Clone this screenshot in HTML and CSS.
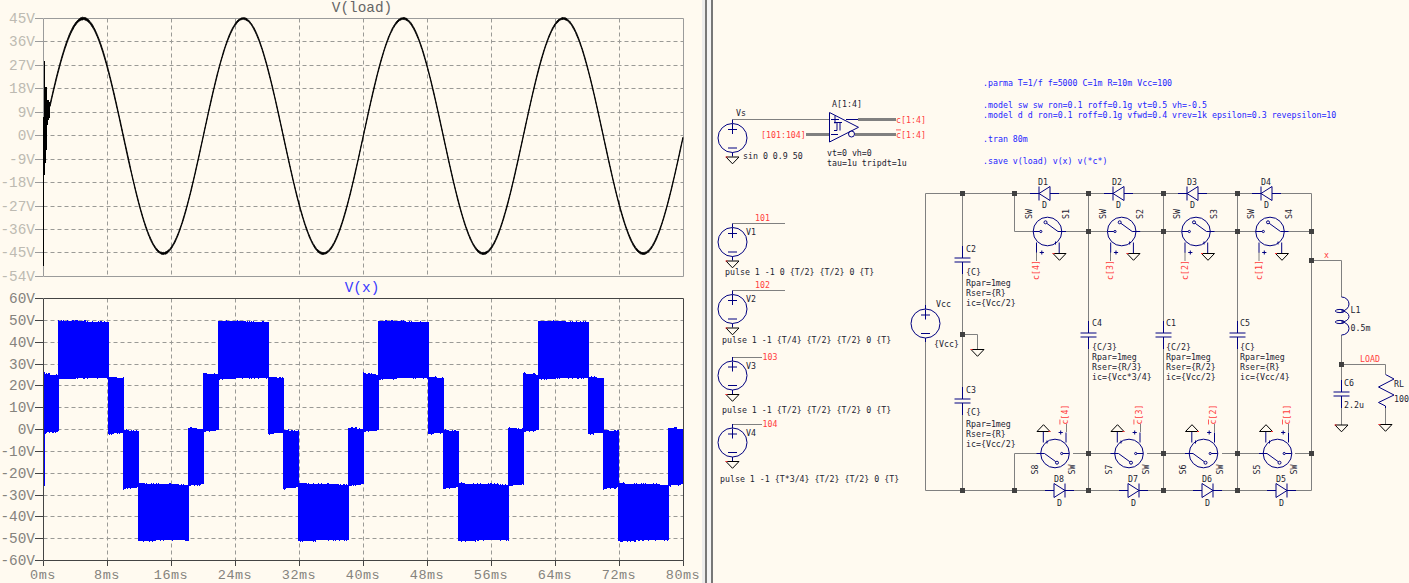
FILE: index.html
```html
<!DOCTYPE html>
<html lang="en">
<head>
<meta charset="utf-8">
<title>Simulation</title>
<link rel="stylesheet" href="styles.css">
</head>
<body>
<div class="app">
  <section class="plots">
    <svg class="plot plot-top" viewBox="0 0 702 279" width="702" height="279" aria-label="V(load) plot">
      <text class="title title-load" x="362" y="12">V(load)</text>
      <path class="grid" d="M107.5 18.5V276.5M171.5 18.5V276.5M235.5 18.5V276.5M299.5 18.5V276.5M363.5 18.5V276.5M427.5 18.5V276.5M491.5 18.5V276.5M555.5 18.5V276.5M619.5 18.5V276.5M43.5 41.5H683.5M43.5 65.5H683.5M43.5 88.5H683.5M43.5 112.5H683.5M43.5 135.5H683.5M43.5 159.5H683.5M43.5 182.5H683.5M43.5 206.5H683.5M43.5 229.5H683.5M43.5 252.5H683.5"/>
      <path class="axis axis-dim" d="M43.5 18.5H683.5V276.5H43.5ZM35 18.5H43M35 41.5H43M35 65.5H43M35 88.5H43M35 112.5H43M35 135.5H43M35 159.5H43M35 182.5H43M35 206.5H43M35 229.5H43M35 252.5H43M35 276.5H43"/>
      <g class="ticks ticks-dim">
        <text x="35" y="23">45V</text><text x="35" y="46">36V</text><text x="35" y="70">27V</text><text x="35" y="93">18V</text><text x="35" y="117">9V</text><text x="35" y="140">0V</text><text x="35" y="164">-9V</text><text x="35" y="187">-18V</text><text x="35" y="211">-27V</text><text x="35" y="234">-36V</text><text x="35" y="257">-45V</text><text x="35" y="281">-54V</text>
      </g>
      <path class="spike" d="M43.5 266V117M44.5 61V175M45.5 87V163M46.5 87V150M47.5 100V125M48.5 100V120M49.5 102V118"/>
      <path id="wave-load" class="wave-load"/>
    </svg>
    <svg class="plot plot-bottom" viewBox="0 279 702 304" width="702" height="304" aria-label="V(x) plot">
      <text class="title title-x" x="362" y="292">V(x)</text>
      <path class="grid" d="M107.5 298.5V560.5M171.5 298.5V560.5M235.5 298.5V560.5M299.5 298.5V560.5M363.5 298.5V560.5M427.5 298.5V560.5M491.5 298.5V560.5M555.5 298.5V560.5M619.5 298.5V560.5M43.5 320.5H683.5M43.5 342.5H683.5M43.5 364.5H683.5M43.5 385.5H683.5M43.5 407.5H683.5M43.5 429.5H683.5M43.5 451.5H683.5M43.5 473.5H683.5M43.5 495.5H683.5M43.5 516.5H683.5M43.5 538.5H683.5"/>
      <path id="wave-x" class="wave-x"/>
      <path class="axis axis-live" d="M43.5 298.5H683.5V560.5H43.5ZM35 298.5H43M35 320.5H43M35 342.5H43M35 364.5H43M35 385.5H43M35 407.5H43M35 429.5H43M35 451.5H43M35 473.5H43M35 495.5H43M35 516.5H43M35 538.5H43M35 560.5H43M43.5 560.5V566M107.5 560.5V566M171.5 560.5V566M235.5 560.5V566M299.5 560.5V566M363.5 560.5V566M427.5 560.5V566M491.5 560.5V566M555.5 560.5V566M619.5 560.5V566M683.5 560.5V566"/>
      <g class="ticks ticks-live">
        <text x="35" y="303">60V</text><text x="35" y="325">50V</text><text x="35" y="347">40V</text><text x="35" y="369">30V</text><text x="35" y="390">20V</text><text x="35" y="412">10V</text><text x="35" y="434">0V</text><text x="35" y="456">-10V</text><text x="35" y="478">-20V</text><text x="35" y="500">-30V</text><text x="35" y="521">-40V</text><text x="35" y="543">-50V</text><text x="35" y="565">-60V</text>
      </g>
      <g class="ticks-x">
        <text x="43" y="578.8">0ms</text><text x="107" y="578.8">8ms</text><text x="171" y="578.8">16ms</text><text x="235" y="578.8">24ms</text><text x="299" y="578.8">32ms</text><text x="363" y="578.8">40ms</text><text x="427" y="578.8">48ms</text><text x="491" y="578.8">56ms</text><text x="555" y="578.8">64ms</text><text x="619" y="578.8">72ms</text><text x="683" y="578.8">80ms</text>
      </g>
    </svg>
  </section>

  <div class="splitter"><span class="split-a"></span><span class="split-b"></span><span class="split-c"></span><span class="split-d"></span></div>

  <section class="schematic">
    <svg class="sheet" viewBox="713 0 696 583" width="696" height="583" aria-label="Schematic">
      <defs>
        <g id="vsrc" class="sym">
          <circle r="14.5"/>
          <path d="M0 -18.5V-14.5M0 -14V-4M-4.5 -8.5H4.5M-4.5 10H4.5M0 14.5V18.5"/>
        </g>
        <g id="gnd">
          <polygon class="gnd" points="-6.5,0 6.5,0 0,6.8"/>
          <rect class="gnd-dot" x="-7" y="-0.5" width="2" height="1"/>
        </g>
        <g id="cap" class="sym">
          <path d="M0 -14V-2M-8 -2H8M-8 2H8M0 2V14"/>
        </g>
        <g id="dl" class="sym">
          <path d="M-14.5 0H-5.5M-5.5 -7V7M5.5 -7V7L-5.5 0L5.5 -7M5.5 0H14.5"/>
        </g>
        <g id="dr" class="sym">
          <path d="M-14.5 0H-5.5M5.5 -7V7M-5.5 -7V7L5.5 0L-5.5 -7M5.5 0H14.5"/>
        </g>
        <g id="sw" class="sym">
          <circle r="14.3"/>
          <circle cx="-6.7" cy="0" r="1.1"/>
          <circle cx="-2" cy="-9.2" r="1.5"/>
          <path d="M-14.3 0H-7.8M-0.8 -8.2L10.5 0H18.5M-11 11V21M11.7 11V22M8 10V13M-7.8 21H-3.6M-5.7 19V23"/>
        </g>
      </defs>

      <path class="wire" d="M732.5 119.5H829M732.5 223.5H785M732.5 290.5H785M732.5 357.5H762M732.5 424.5H762"/>
      <path class="wire" d="M925.5 193.5V305M925.5 341.5V490.5M962.5 193.5V246M962.5 274V387M962.5 415V490.5M925.5 193.5H1030M1059 193.5H1104M1133 193.5H1178M1207 193.5H1252M1281 193.5H1311.5V490.5M925.5 490.5H1045M1073 490.5H1119M1148 490.5H1193M1222 490.5H1267M1296 490.5H1311.5"/>
      <path class="wire" d="M1014.5 193.5V231.5H1033M1066 231.5H1107M1140 231.5H1181M1214 231.5H1256M1288 231.5H1311.5M1014.5 490.5V453.5H1041M1073 453.5H1115M1147 453.5H1189M1222 453.5H1263M1295 453.5H1311.5"/>
      <path class="wire" d="M1088.5 193.5V321M1088.5 349V490.5M1163.5 193.5V321M1163.5 349V490.5M1237.5 193.5V321M1237.5 349V490.5M962.5 334.5H977.5V349M1311.5 260.5H1341.5V297M1341.5 335V380M1341.5 408V425M1341.5 364.5H1385.5V374M1385.5 408V424"/>
      <path class="wire" d="M1036.5 252V261M1110.5 252V261M1185 252V261M1259 252V261M1066.5 424V432M1140.5 424V432M1214.5 424V432M1288.5 424V432"/>
      <path class="bus" d="M858 119.5H896M855 134.5H896M806 134.5H829"/>

      <use href="#vsrc" x="732.5" y="138"/><use href="#gnd" x="732.5" y="157"/>
      <use href="#vsrc" x="732.5" y="242"/><use href="#gnd" x="732.5" y="261"/>
      <use href="#vsrc" x="732.5" y="309"/><use href="#gnd" x="732.5" y="328"/>
      <use href="#vsrc" x="732.5" y="375.5"/><use href="#gnd" x="732.5" y="394.5"/>
      <use href="#vsrc" x="732.5" y="442.5"/><use href="#gnd" x="732.5" y="461.5"/>
      <use href="#vsrc" x="925.5" y="323.5"/>

      <g class="sym">
        <path d="M829.5 112.5V142L858.5 127.3ZM831 119.5H839M835 115.5V123.5M831 134.5H838M846 119.5H858M834 130.5H837V122.5H840M840 122.5V130.5M834 122.5H842"/>
        <circle cx="851.5" cy="134" r="3"/>
        <path d="M1341.5 297a7.5 7 0 0 1 0 14a7.5 5.5 0 0 1 0 11a7.5 6.5 0 0 1 0 13"/>
        <ellipse cx="1340" cy="311" rx="4.7" ry="1.6"/>
        <ellipse cx="1340" cy="322" rx="4.7" ry="1.6"/>
        <path d="M1385.5 374.5L1394 379L1378.5 387L1394 395L1378.5 402.5L1385.5 406V408"/>
      </g>

      <use href="#cap" x="962.5" y="260"/>
      <use href="#cap" x="962.5" y="401"/>
      <use href="#cap" x="1088.5" y="335"/>
      <use href="#cap" x="1163.5" y="335"/>
      <use href="#cap" x="1237.5" y="335"/>
      <use href="#cap" x="1341.5" y="394"/>

      <use href="#dl" x="1044.5" y="193.5"/><use href="#dl" x="1118.5" y="193.5"/><use href="#dl" x="1192.5" y="193.5"/><use href="#dl" x="1266.5" y="193.5"/>
      <use href="#dr" x="1059.5" y="490.5"/><use href="#dr" x="1133.5" y="490.5"/><use href="#dr" x="1207.5" y="490.5"/><use href="#dr" x="1281.5" y="490.5"/>

      <use href="#sw" x="1047.5" y="231.5"/><use href="#sw" x="1121.7" y="231.5"/><use href="#sw" x="1196" y="231.5"/><use href="#sw" x="1270" y="231.5"/>
      <use href="#sw" transform="translate(1055 453.5) rotate(180)"/><use href="#sw" transform="translate(1129 453.5) rotate(180)"/><use href="#sw" transform="translate(1203.5 453.5) rotate(180)"/><use href="#sw" transform="translate(1277.5 453.5) rotate(180)"/>

      <use href="#gnd" x="1059.5" y="253.5"/><use href="#gnd" x="1133.5" y="253.5"/><use href="#gnd" x="1208" y="253.5"/><use href="#gnd" x="1282" y="253.5"/>
      <use href="#gnd" transform="translate(1043.5 431.5) rotate(180)"/><use href="#gnd" transform="translate(1117.5 431.5) rotate(180)"/><use href="#gnd" transform="translate(1192 431.5) rotate(180)"/><use href="#gnd" transform="translate(1266 431.5) rotate(180)"/>
      <use href="#gnd" x="977.5" y="349.5"/><use href="#gnd" x="1341.5" y="425"/><use href="#gnd" x="1385.5" y="424.5"/>

      <g class="junctions">
        <rect x="960" y="191" width="5" height="5"/><rect x="1012" y="191" width="5" height="5"/><rect x="1086" y="191" width="5" height="5"/><rect x="1161" y="191" width="5" height="5"/><rect x="1235" y="191" width="5" height="5"/>
        <rect x="1086" y="229" width="5" height="5"/><rect x="1161" y="229" width="5" height="5"/><rect x="1235" y="229" width="5" height="5"/><rect x="1309" y="229" width="5" height="5"/>
        <rect x="1309" y="258" width="5" height="5"/><rect x="960" y="332" width="5" height="5"/><rect x="1339" y="362" width="5" height="5"/>
        <rect x="1086" y="451" width="5" height="5"/><rect x="1161" y="451" width="5" height="5"/><rect x="1235" y="451" width="5" height="5"/><rect x="1309" y="451" width="5" height="5"/>
        <rect x="960" y="488" width="5" height="5"/><rect x="1012" y="488" width="5" height="5"/><rect x="1086" y="488" width="5" height="5"/><rect x="1161" y="488" width="5" height="5"/><rect x="1235" y="488" width="5" height="5"/>
      </g>

      <g class="dir">
        <text x="983" y="85.5">.parma T=1/f f=5000 C=1m R=10m Vcc=100</text>
        <text x="983" y="107.5">.model sw sw ron=0.1 roff=0.1g vt=0.5 vh=-0.5</text>
        <text x="983" y="118">.model d d ron=0.1 roff=0.1g vfwd=0.4 vrev=1k epsilon=0.3 revepsilon=10</text>
        <text x="983" y="141.5">.tran 80m</text>
        <text x="983" y="164">.save v(load) v(x) v(*c*)</text>
      </g>

      <g class="lbl">
        <text x="736" y="116">Vs</text><text x="743" y="159">sin 0 0.9 50</text>
        <text x="832" y="107">A[1:4]</text><text x="827" y="156">vt=0 vh=0</text><text x="827" y="166">tau=1u tripdt=1u</text>
        <text x="746" y="235">V1</text><text x="725" y="275">pulse 1 -1 0 {T/2} {T/2} 0 {T}</text>
        <text x="746" y="302">V2</text><text x="722" y="343">pulse 1 -1 {T/4} {T/2} {T/2} 0 {T}</text>
        <text x="746" y="369">V3</text><text x="722" y="413">pulse 1 -1 {T/2} {T/2} {T/2} 0 {T}</text>
        <text x="746" y="436">V4</text><text x="720" y="482">pulse 1 -1 {T*3/4} {T/2} {T/2} 0 {T}</text>
        <text x="936" y="307">Vcc</text><text x="934" y="347">{Vcc}</text>

        <text x="966" y="252">C2</text><text x="966" y="274.5">{C}</text><text x="966" y="285.5">Rpar=1meg</text><text x="966" y="295.5">Rser={R}</text><text x="966" y="305.5">ic={Vcc/2}</text>
        <text x="966" y="393">C3</text><text x="966" y="415">{C}</text><text x="966" y="426.5">Rpar=1meg</text><text x="966" y="436.5">Rser={R}</text><text x="966" y="446.5">ic={Vcc/2}</text>
        <text x="1092" y="325.5">C4</text><text x="1092" y="349.5">{C/3}</text><text x="1092" y="359.5">Rpar=1meg</text><text x="1092" y="369.5">Rser={R/3}</text><text x="1092" y="379.5">ic={Vcc*3/4}</text>
        <text x="1166" y="325.5">C1</text><text x="1166" y="349.5">{C/2}</text><text x="1166" y="359.5">Rpar=1meg</text><text x="1166" y="369.5">Rser={R/2}</text><text x="1166" y="379.5">ic={Vcc/2}</text>
        <text x="1240" y="325.5">C5</text><text x="1240" y="349.5">{C}</text><text x="1240" y="359.5">Rpar=1meg</text><text x="1240" y="369.5">Rser={R}</text><text x="1240" y="379.5">ic={Vcc/4}</text>

        <text x="1038" y="184.5">D1</text><text x="1042" y="208">D</text><text x="1112" y="184.5">D2</text><text x="1116" y="208">D</text><text x="1187" y="184.5">D3</text><text x="1190" y="208">D</text><text x="1261" y="184.5">D4</text><text x="1264" y="208">D</text>
        <text x="1054" y="481.5">D8</text><text x="1057" y="505.5">D</text><text x="1128" y="481.5">D7</text><text x="1131" y="505.5">D</text><text x="1202" y="481.5">D6</text><text x="1205" y="505.5">D</text><text x="1276" y="481.5">D5</text><text x="1279" y="505.5">D</text>

        <text transform="translate(1032 219) rotate(-90)">SW</text><text transform="translate(1069 219) rotate(-90)">S1</text>
        <text transform="translate(1106 219) rotate(-90)">SW</text><text transform="translate(1143 219) rotate(-90)">S2</text>
        <text transform="translate(1180 219) rotate(-90)">SW</text><text transform="translate(1217 219) rotate(-90)">S3</text>
        <text transform="translate(1254 219) rotate(-90)">SW</text><text transform="translate(1292 219) rotate(-90)">S4</text>
        <text transform="translate(1038 474.5) rotate(-90)">S8</text><text transform="translate(1075 474.5) rotate(-90)">SW</text>
        <text transform="translate(1112 474.5) rotate(-90)">S7</text><text transform="translate(1149 474.5) rotate(-90)">SW</text>
        <text transform="translate(1186 474.5) rotate(-90)">S6</text><text transform="translate(1223 474.5) rotate(-90)">SW</text>
        <text transform="translate(1260 474.5) rotate(-90)">S5</text><text transform="translate(1297 474.5) rotate(-90)">SW</text>

        <text x="1350.5" y="313">L1</text><text x="1350.5" y="331">0.5m</text>
        <text x="1344" y="386">C6</text><text x="1344" y="408">2.2u</text>
        <text x="1394" y="386.5">RL</text><text x="1394" y="402">100</text>
      </g>

      <g class="net">
        <text x="761" y="137.5">[101:104]</text>
        <text x="896" y="122.5">c[1:4]</text>
        <text x="896" y="137.5"><tspan class="bar">c</tspan>[1:4]</text>
        <text x="755" y="221">101</text><text x="755" y="288">102</text><text x="762.6" y="360">103</text><text x="762.6" y="427">104</text>
        <text x="1324" y="258">x</text><text x="1360" y="362">LOAD</text>
        <text transform="translate(1039 280) rotate(-90)">c[4]</text>
        <text transform="translate(1113 280) rotate(-90)">c[3]</text>
        <text transform="translate(1187.5 280) rotate(-90)">c[2]</text>
        <text transform="translate(1261.5 280) rotate(-90)">c[1]</text>
        <text transform="translate(1067.5 424.5) rotate(-90)"><tspan class="bar">c</tspan>[4]</text>
        <text transform="translate(1141.5 424.5) rotate(-90)"><tspan class="bar">c</tspan>[3]</text>
        <text transform="translate(1216 424.5) rotate(-90)"><tspan class="bar">c</tspan>[2]</text>
        <text transform="translate(1290 424.5) rotate(-90)"><tspan class="bar">c</tspan>[1]</text>
      </g>
    </svg>
  </section>
</div>
<script src="plot.js"></script>
</body>
</html>
```
FILE: styles.css
```css
html, body { margin: 0; padding: 0; height: 100%; background: #fffaf0; overflow: hidden; }
.app { display: flex; width: 1409px; height: 583px; background: #fffaf0; }
.plots { display: flex; flex-direction: column; width: 702px; flex: none; }
.plot { display: block; flex: none; overflow: visible; }
.schematic { flex: 1; min-width: 0; }
.sheet { display: block; }

.splitter { display: flex; flex: none; width: 11px; height: 583px; }
.split-a { width: 3px; background: #ececec; }
.split-b { width: 2px; background: #777777; }
.split-c { width: 4px; background: #f4f4f4; }
.split-d { width: 2px; background: #777777; }

.title, .ticks text, .ticks-x text { font-family: "Liberation Mono", "DejaVu Sans Mono", monospace; font-size: 14.4px; }
.title { text-anchor: middle; }
.title-load { fill: #666666; }
.title-x { fill: #3a3aff; }
.ticks text { text-anchor: end; }
.ticks-dim text { fill: #bdbab2; }
.ticks-live text { fill: #85837d; }
.ticks-x text { fill: #85837d; text-anchor: middle; font-size: 13.5px; letter-spacing: 0.5px; }
.grid { fill: none; stroke: #9a9a96; stroke-width: 1; stroke-dasharray: 4 3; }
.axis { fill: none; stroke-width: 1; }
.axis-dim { stroke: #9b9b9b; }
.axis-live { stroke: #444444; }
.spike { fill: none; stroke: #000000; stroke-width: 1; }
.wave-load { fill: #000000; stroke: #000000; stroke-width: 0.9; }
.wave-x { fill: #0000ff; }

.wire { fill: none; stroke: #808080; stroke-width: 1; }
.bus { fill: none; stroke: #808080; stroke-width: 3; }
.sym { fill: none; stroke: #000080; stroke-width: 1; }
.gnd { fill: none; stroke: #000000; stroke-width: 1; }
.gnd-dot { fill: #ff3030; }
.junctions rect { fill: #404040; }

.lbl text, .net text, .dir text { font-family: "DejaVu Sans Mono", "Liberation Mono", monospace; font-size: 8.27px; }
.lbl text { fill: #1c2230; }
.net text { fill: #ff3c3c; }
.dir text { fill: #2424ff; }
.bar { text-decoration: overline; }
```
FILE: plot.js
```js
(function () {
  var seed = 7;
  function rnd() {
    seed = (seed * 16807) % 2147483647;
    return seed / 2147483647;
  }

  // V(load): sine with a small vertical switching ripple
  var up = [], low = [], x, y, a;
  for (x = 50; x <= 683.4; x += 0.8) {
    y = 136 - 117.5 * Math.sin((2 * Math.PI * (x - 43.3)) / 160);
    a = (x < 130 ? 1.0 : 0.7) + rnd() * 0.4;
    up.push(x.toFixed(1) + ' ' + (y - a).toFixed(1));
    low.unshift(x.toFixed(1) + ' ' + (y + a).toFixed(1));
  }
  document.getElementById('wave-load').setAttribute('d', 'M' + up.join('L') + 'L' + low.join('L') + 'Z');

  // V(x): staircase of PWM blocks, one period = 160px
  var pattern = [
    [58, 108.7, 320.7, 379],
    [108, 124, 376.7, 434],
    [123, 139, 430, 488.7],
    [138, 189, 483.3, 541],
    [188, 204, 427.7, 485.7],
    [203, 219, 373.3, 431.7]
  ];
  var blocks = [[43, 44, 372, 538], [44, 45, 372, 486], [45, 59, 374, 432.7]];
  var p, i, b;
  for (p = 0; p < 4; p++) {
    for (i = 0; i < pattern.length; i++) {
      b = pattern[i];
      blocks.push([b[0] + p * 160, b[1] + p * 160, b[2], b[3]]);
    }
  }
  var d = '';
  blocks.forEach(function (r) {
    var x0 = Math.round(r[0]), x1 = Math.min(Math.round(r[1]), 684);
    var n = x1 - x0, col, t, bt;
    for (col = x0; col < x1; col++) {
      var f = n > 1 ? (col - x0) / n : 0;
      t = r[2] + f * 1.5 + (rnd() < 0.2 ? -1 : 0);
      bt = r[3] - f * 1.5 + (rnd() < 0.2 ? 1 : 0);
      d += 'M' + col + ' ' + t.toFixed(0) + 'h1V' + bt.toFixed(0) + 'h-1z';
    }
  });
  document.getElementById('wave-x').setAttribute('d', d);
})();
```
